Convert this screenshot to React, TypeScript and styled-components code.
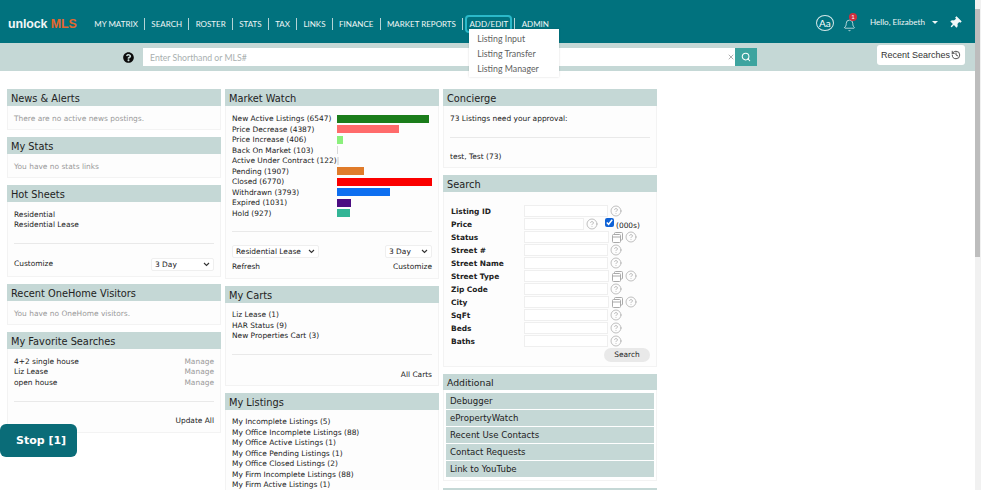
import React from "react";
import styled, { createGlobalStyle } from "styled-components";
import { Bell, CircleHelp, History, Search as SearchIcon, X } from "lucide-react";
import { FaQuestionCircle, FaThumbtack } from "react-icons/fa";

const Global = createGlobalStyle`
  html, body { margin: 0; padding: 0; height: 490px; overflow: hidden; background: #fff; }
  * { box-sizing: border-box; }
`;

const Page = styled.div`
  position: relative; display: flex; width: 981px; height: 490px; overflow: hidden;
`;
const Main = styled.div`flex: 1; min-width: 0; display: flex; flex-direction: column;`;
const ScrollTrack = styled.div`
  width: 6px; background: #f1f1f1; padding: 9px 1px 0 0;
`;
const ScrollThumb = styled.div`width: 5px; height: 248px; background: #bdbdbd;`;

const TopBar = styled.header`
  height: 43px; background: #01727e; display: flex; align-items: center; padding: 5px 0 0 8px; color: #fff;
  font-family: Lato, sans-serif; flex: none;
`;
const Logo = styled.div`
  width: 80px; font: bold 12.4px "Liberation Sans", sans-serif; color: #f2f6f6; letter-spacing: -0.1px;
  span { color: #e5672e; font-weight: bold; }
`;
const Nav = styled.nav`display: flex; align-items: center; position: relative;`;
const NavItem = styled.div<{ $focus?: boolean; $last?: boolean }>`
  position: relative; font-size: 8px; line-height: 12px; padding: 0 6.25px; color: #f0f6f6; white-space: nowrap;
  border-right: ${p => (p.$last ? "none" : "1px solid #b5d3d5")};
  ${p => p.$focus && `&::before { content: ""; position: absolute; left: 2px; right: 2px; top: -3px; bottom: -3px;
    border: 2px solid #2bb9c9; border-radius: 4px; }`}
`;
const Menu = styled.div`
  position: absolute; left: 6px; top: 11px; width: 90px; height: 48px; background: #fff; z-index: 3;
  box-shadow: 0 0 2px rgba(0,0,0,.15); padding: 2px 8px 0;
  display: flex; flex-direction: column; justify-content: space-around;
  font-size: 8.8px; color: #5f5f5f;
`;
const RightTools = styled.div`
  margin-left: auto; display: flex; align-items: center; padding-right: 14px; transform: translateY(-1px);
`;
const AaBadge = styled.div`
  width: 18px; height: 16px; border: 1px solid #d5e8e9; border-radius: 50%; font-size: 10px; line-height: 14px; text-align: center;
`;
const BellWrap = styled.div`
  position: relative; width: 13px; height: 14px; margin-left: 9px; color: #d7e9ea;
`;
const Badge = styled.span`
  position: absolute; left: 6px; top: -3px; width: 8px; height: 8px; border-radius: 50%; background: #cd2f3f; color: #fff;
  font-size: 6px; line-height: 8px; text-align: center;
`;
const Hello = styled.div`margin-left: 14px; font-size: 8.1px; color: #f0f6f6; transform: translateY(-1px);`;
const Caret = styled.span`
  display: inline-block; margin-left: 5px; border: 3px solid transparent; border-top-color: #f0f6f6; border-bottom: 0; vertical-align: middle;
`;
const PinWrap = styled.div`margin-left: 11px; width: 12px; height: 12px; display: flex; transform: rotate(45deg);`;

const SearchBar = styled.div`
  height: 28px; background: #c5d8d6; display: flex; align-items: center; flex: none; padding-left: 123px; position: relative;
`;
const HelpDot = styled.div`width: 11px; height: 11px; color: #0b0b0b; display: flex; margin-right: 9px;`;
const QuickInput = styled.div`
  width: 592px; height: 18px; background: #fff; font: 8.7px Lato, sans-serif; color: #a9b0b0; padding-left: 7px;
  display: flex; align-items: center; justify-content: space-between; padding-right: 0;
`;
const GoButton = styled.div`
  width: 22px; height: 18px; background: #3da49f; color: #fff; display: flex; align-items: center; justify-content: center;
`;
const RecentButton = styled.div`
  margin-left: auto; margin-right: 10px; margin-top: -4px; width: 88px; height: 20px; background: #fff; border-radius: 3px;
  font: 9px "Liberation Sans", sans-serif; color: #333; display: flex; align-items: center; justify-content: center; gap: 1px; white-space: nowrap;
`;

const Columns = styled.main`
  display: grid; grid-template-columns: repeat(3, 214px); gap: 4px; padding: 18px 0 0 7px; align-items: start;
  font-family: "DejaVu Sans", sans-serif; color: #222; font-size: 7.45px;
`;
const Column = styled.div`display: flex; flex-direction: column; gap: 7px;`;
const Widget = styled.section`background: #fdfdfd; border: 1px solid #f3f3f3; border-top: 0;`;
const Heading = styled.h2<{ $small?: boolean }>`
  margin: 0 -1px; height: ${p => (p.$small ? "16px" : "17px")}; background: #c5d8d6;
  font: normal ${p => (p.$small ? "9.3px" : "9.8px")}/${p => (p.$small ? "18px" : "19px")} "DejaVu Sans", sans-serif;
  padding-left: 4px; color: #222;
`;
const Body = styled.div<{ $h?: number; $pb?: number }>`
  padding: 7.5px 6px ${p => p.$pb ?? 6}px; ${p => p.$h && `height: ${p.$h}px;`}
`;
const Muted = styled.div`color: #9a9a9a; line-height: 10.5px;`;
const Line = styled.div`line-height: 10.5px; white-space: nowrap;`;
const Rule = styled.hr<{ $top: number; $bottom: number }>`
  border: 0; height: 1px; background: #e9e9e9; margin: ${p => p.$top}px 0 ${p => p.$bottom}px;
`;
const Spread = styled.div<{ $gap?: number }>`
  display: flex; justify-content: space-between; align-items: center; line-height: 10.5px; margin-top: ${p => p.$gap ?? 0}px;
`;
const Manage = styled.span`color: #9a9a9a;`;
const Select = styled.div<{ $w: number }>`
  width: ${p => p.$w}px; height: 13px; background: #fff; border: 1px solid #efefef; border-radius: 2px; padding: 0 3px;
  display: flex; align-items: center; justify-content: space-between; font-size: 7.45px; line-height: 11px;
`;
const Chevron = () => (
  <svg width="7" height="5" viewBox="0 0 7 5"><path d="M1 1l2.5 2.5L6 1" fill="none" stroke="#333" strokeWidth="1.1" /></svg>
);
const MarketRow = styled.div`display: flex; align-items: center; height: 10.5px; white-space: nowrap;`;
const MarketLabel = styled.span`width: 105px; flex: none;`;
const Bar = styled.div<{ $c: string }>`height: 8px; background: ${p => p.$c}; flex: none;`;
const RightText = styled.div`text-align: right; line-height: 10.5px;`;

const SearchForm = styled.div`padding: 12.5px 6px 6px 7px; height: 174px; display: flex; flex-direction: column;`;
const FormRow = styled.div`display: flex; align-items: center; height: 13px; flex: none;`;
const FormLabel = styled.label`width: 73px; font-weight: bold; color: #222; flex: none;`;
const Field = styled.div<{ $w: number }>`
  width: ${p => p.$w}px; height: 12px; background: #fff; border: 1px solid #efefef; flex: none;
`;
const Help = styled(CircleHelp)`width: 12px; height: 12px; color: #a5a5a5; stroke-width: 1.4px; margin-left: 2px; flex: none;`;
const Check = styled.input`width: 9px; height: 9px; margin: -3px 0 0 7px; accent-color: #0f62d6; flex: none;`;
const Unit = styled.span`margin-left: 2px; margin-top: 2px;`;
const PickIcon = () => (
  <svg width="11" height="11" viewBox="0 0 11 11" style={{ marginLeft: 3, flex: "none" }}>
    <rect x="2.5" y=".5" width="8" height="7.5" rx="1" fill="none" stroke="#aaa" />
    <rect x=".5" y="2.5" width="8" height="8" rx="1" fill="#fff" stroke="#aaa" />
    <path d="M.5 5h8" stroke="#aaa" />
  </svg>
);
const SearchButton = styled.div`
  align-self: flex-end; margin-top: 0; width: 46px; height: 14px; background: #e9e9e9; border-radius: 7px; text-align: center; line-height: 14px;
`;
const LinkList = styled.div`background: #fff; padding: 3px 2px; display: flex; flex-direction: column; gap: 1px;`;
const LinkItem = styled.div`
  height: 16px; line-height: 16px; background: #c5d8d6; padding-left: 4px; font-size: 8.6px; color: #222;
`;
const StopButton = styled.div`
  position: absolute; left: 0; top: 424px; width: 77px; height: 33px; background: #0a6c78; border-radius: 6px; color: #fff;
  font: bold 11px/33px "DejaVu Sans", sans-serif; padding-left: 16px; z-index: 4;
`;

const navItems = ["MY MATRIX", "SEARCH", "ROSTER", "STATS", "TAX", "LINKS", "FINANCE", "MARKET REPORTS"];
const market: [string, number, string][] = [
  ["New Active Listings (6547)", 6547, "#1b7d1b"],
  ["Price Decrease (4387)", 4387, "#ff6b6b"],
  ["Price Increase (406)", 406, "#8bf07c"],
  ["Back On Market (103)", 103, "#d9d9d9"],
  ["Active Under Contract (122)", 122, "#e4e4e4"],
  ["Pending (1907)", 1907, "#e07b2a"],
  ["Closed (6770)", 6770, "#fb0000"],
  ["Withdrawn (3793)", 3793, "#0e6ff0"],
  ["Expired (1031)", 1031, "#4b0d82"],
  ["Hold (927)", 927, "#33b596"],
];
const form: { label: string; pick?: boolean }[] = [
  { label: "Status", pick: true },
  { label: "Street #" },
  { label: "Street Name" },
  { label: "Street Type", pick: true },
  { label: "Zip Code" },
  { label: "City", pick: true },
  { label: "SqFt" },
  { label: "Beds" },
  { label: "Baths" },
];
const listings = [
  "My Incomplete Listings (5)",
  "My Office Incomplete Listings (88)",
  "My Office Active Listings (1)",
  "My Office Pending Listings (1)",
  "My Office Closed Listings (2)",
  "My Firm Incomplete Listings (88)",
  "My Firm Active Listings (1)",
];

export default function App() {
  return (
    <Page>
      <Global />
      <Main>
        <TopBar>
          <Logo>unlock <span>MLS</span></Logo>
          <Nav>
            {navItems.map(n => <NavItem key={n}>{n}</NavItem>)}
            <NavItem $focus>
              ADD/EDIT
              <Menu>
                <div>Listing Input</div>
                <div>Listing Transfer</div>
                <div>Listing Manager</div>
              </Menu>
            </NavItem>
            <NavItem $last>ADMIN</NavItem>
          </Nav>
          <RightTools>
            <AaBadge>Aa</AaBadge>
            <BellWrap>
              <Bell size={13} strokeWidth={1.5} />
              <Badge>1</Badge>
            </BellWrap>
            <Hello>Hello, Elizabeth <Caret /></Hello>
            <PinWrap><FaThumbtack size={12} color="#f2f8f8" /></PinWrap>
          </RightTools>
        </TopBar>
        <SearchBar>
          <HelpDot><FaQuestionCircle size={11} /></HelpDot>
          <QuickInput>
            Enter Shorthand or MLS#
            <X size={8} color="#888" />
          </QuickInput>
          <GoButton><SearchIcon size={10} strokeWidth={2.5} /></GoButton>
          <RecentButton>Recent Searches <History size={10} /></RecentButton>
        </SearchBar>
        <Columns>
          <Column>
            <Widget>
              <Heading>News &amp; Alerts</Heading>
              <Body $h={23}><Muted>There are no active news postings.</Muted></Body>
            </Widget>
            <Widget>
              <Heading>My Stats</Heading>
              <Body $h={23}><Muted>You have no stats links</Muted></Body>
            </Widget>
            <Widget>
              <Heading>Hot Sheets</Heading>
              <Body $pb={5}>
                <Line>Residential</Line>
                <Line>Residential Lease</Line>
                <Rule $top={12.5} $bottom={14} />
                <Spread>
                  <span>Customize</span>
                  <Select $w={63}>3 Day <Chevron /></Select>
                </Spread>
              </Body>
            </Widget>
            <Widget>
              <Heading>Recent OneHome Visitors</Heading>
              <Body $h={23}><Muted>You have no OneHome visitors.</Muted></Body>
            </Widget>
            <Widget>
              <Heading>My Favorite Searches</Heading>
              <Body>
                <Spread><span>4+2 single house</span><Manage>Manage</Manage></Spread>
                <Spread><span>Liz Lease</span><Manage>Manage</Manage></Spread>
                <Spread><span>open house</span><Manage>Manage</Manage></Spread>
                <Rule $top={12.5} $bottom={14} />
                <RightText>Update All</RightText>
              </Body>
            </Widget>
          </Column>
          <Column>
            <Widget>
              <Heading>Market Watch</Heading>
              <Body $pb={5}>
                {market.map(([label, v, c]) => (
                  <MarketRow key={label}>
                    <MarketLabel>{label}</MarketLabel>
                    <Bar $c={c} style={{ width: (v / 6770) * 95 }} />
                  </MarketRow>
                ))}
                <Rule $top={12.5} $bottom={13} />
                <Spread>
                  <Select $w={87}>Residential Lease <Chevron /></Select>
                  <Select $w={47}>3 Day <Chevron /></Select>
                </Spread>
                <Spread $gap={4}><span>Refresh</span><span>Customize</span></Spread>
              </Body>
            </Widget>
            <Widget>
              <Heading>My Carts</Heading>
              <Body $pb={4}>
                <Line>Liz Lease (1)</Line>
                <Line>HAR Status (9)</Line>
                <Line>New Properties Cart (3)</Line>
                <Rule $top={12.5} $bottom={15} />
                <RightText>All Carts</RightText>
              </Body>
            </Widget>
            <Widget>
              <Heading>My Listings</Heading>
              <Body>
                {listings.map(l => <Line key={l}>{l}</Line>)}
              </Body>
            </Widget>
          </Column>
          <Column>
            <Widget>
              <Heading>Concierge</Heading>
              <Body $pb={5}>
                <Line>73 Listings need your approval:</Line>
                <Rule $top={12.5} $bottom={14} />
                <Line>test, Test (73)</Line>
              </Body>
            </Widget>
            <Widget>
              <Heading>Search</Heading>
              <SearchForm>
                <FormRow><FormLabel>Listing ID</FormLabel><Field $w={84} /><Help /></FormRow>
                <FormRow>
                  <FormLabel>Price</FormLabel><Field $w={60} /><Help />
                  <Check type="checkbox" defaultChecked readOnly /><Unit>(000s)</Unit>
                </FormRow>
                {form.map(f => (
                  <FormRow key={f.label}>
                    <FormLabel>{f.label}</FormLabel>
                    <Field $w={f.pick ? 85 : 84} />
                    {f.pick && <PickIcon />}
                    <Help />
                  </FormRow>
                ))}
                <SearchButton>Search</SearchButton>
              </SearchForm>
            </Widget>
            <Widget>
              <Heading $small>Additional</Heading>
              <LinkList>
                <LinkItem>Debugger</LinkItem>
                <LinkItem>ePropertyWatch</LinkItem>
                <LinkItem>Recent Use Contacts</LinkItem>
                <LinkItem>Contact Requests</LinkItem>
                <LinkItem>Link to YouTube</LinkItem>
              </LinkList>
            </Widget>
            <Widget>
              <Heading $small />
            </Widget>
          </Column>
        </Columns>
      </Main>
      <ScrollTrack><ScrollThumb /></ScrollTrack>
      <StopButton>Stop [1]</StopButton>
    </Page>
  );
}
